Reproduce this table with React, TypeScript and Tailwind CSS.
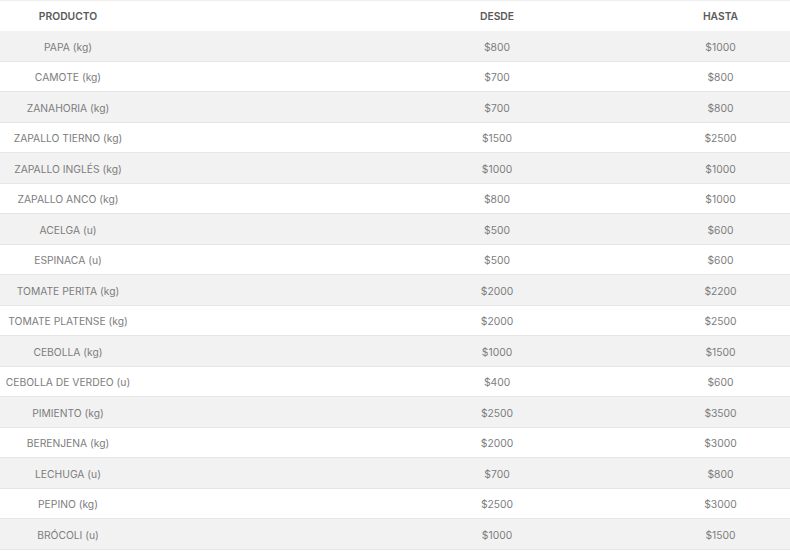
const rows: [string, string, string][] = [
  ['PAPA (kg)', '$800', '$1000'],
  ['CAMOTE (kg)', '$700', '$800'],
  ['ZANAHORIA (kg)', '$700', '$800'],
  ['ZAPALLO TIERNO (kg)', '$1500', '$2500'],
  ['ZAPALLO INGLÉS (kg)', '$1000', '$1000'],
  ['ZAPALLO ANCO (kg)', '$800', '$1000'],
  ['ACELGA (u)', '$500', '$600'],
  ['ESPINACA (u)', '$500', '$600'],
  ['TOMATE PERITA (kg)', '$2000', '$2200'],
  ['TOMATE PLATENSE (kg)', '$2000', '$2500'],
  ['CEBOLLA (kg)', '$1000', '$1500'],
  ['CEBOLLA DE VERDEO (u)', '$400', '$600'],
  ['PIMIENTO (kg)', '$2500', '$3500'],
  ['BERENJENA (kg)', '$2000', '$3000'],
  ['LECHUGA (u)', '$700', '$800'],
  ['PEPINO (kg)', '$2500', '$3000'],
  ['BRÓCOLI (u)', '$1000', '$1500'],
];

export default function App() {
  return (
    <div className="w-[790px] h-[553px] bg-white overflow-hidden font-['Inter',sans-serif] text-[10.3px]">
      <div className="h-px bg-[#eeeeee]" />
      {/* header */}
      <div className="flex h-[30px] items-center pt-[2px] font-semibold text-[#5a5a5a]">
        <div className="w-[136px] text-center">PRODUCTO</div>
        <div className="w-[473px] pl-[249px] text-center">DESDE</div>
        <div className="flex-1 pl-[42px] text-center">HASTA</div>
      </div>
      {rows.map(([name, from, to], i) => (
        <div
          key={name}
          className={
            'flex h-[30.5px] items-center pt-[3px] border-b border-[#e6e6e6] text-[#7d7d7d] ' +
            (i % 2 === 0 ? 'bg-[#f2f2f2]' : 'bg-white')
          }
        >
          <div className="w-[136px] text-center whitespace-nowrap">{name}</div>
          <div className="w-[473px] pl-[249px] text-center">{from}</div>
          <div className="flex-1 pl-[42px] text-center">{to}</div>
        </div>
      ))}
    </div>
  );
}
